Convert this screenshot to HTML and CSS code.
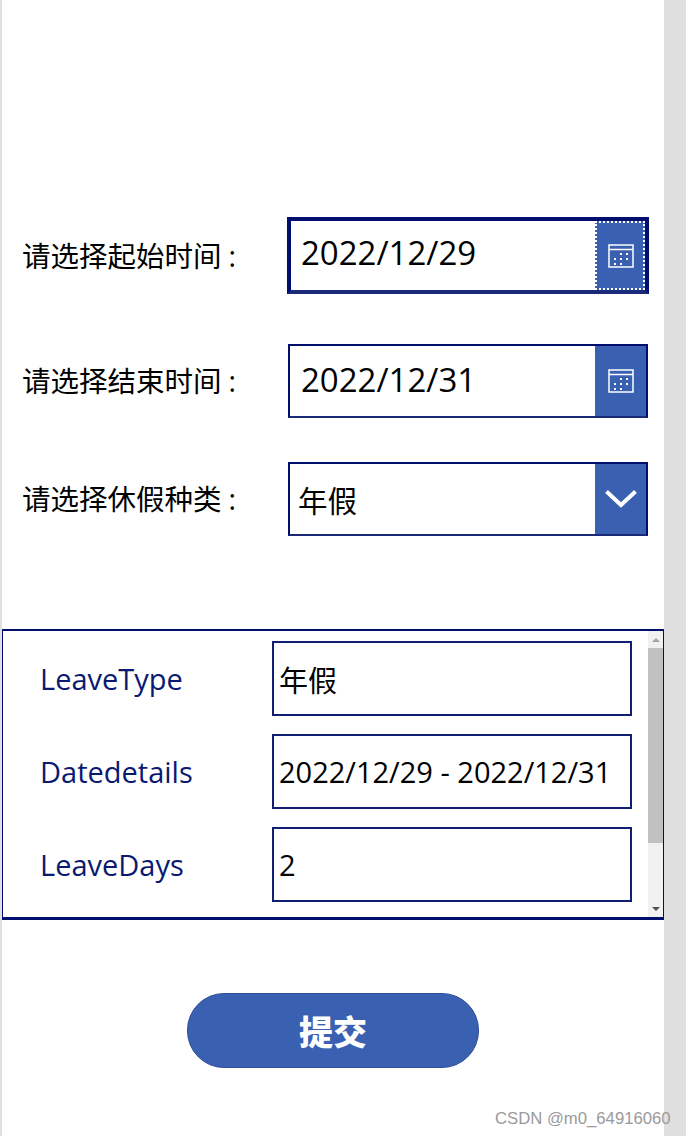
FILE: index.html
```html
<!DOCTYPE html>
<html lang="zh">
<head>
<meta charset="utf-8">
<title>请假申请</title>
<link rel="stylesheet" href="styles.css">
</head>
<body>
<div class="page">
  <main class="app">
    <section class="form">
      <div class="row row-first">
        <div class="label">请选择起始时间<span class="colon">:</span></div>
        <div class="field field-focus">
          <div class="value">2022/12/29</div>
          <div class="btn btn-focus">
            <svg class="cal" viewBox="0 0 26 24" width="26" height="24"><path d="M1 1h24v22H1zM1 5.500h24" fill="none" stroke="#fff" stroke-width="1.500"/><path d="M6 14h2v2H6zM6 19h2v2H6zM12 9h2v2h-2zM12 14h2v2h-2zM12 19h2v2h-2zM18 9h2v2h-2zM18 14h2v2h-2z" fill="#fff"/></svg>
          </div>
        </div>
      </div>
      <div class="row row-second">
        <div class="label">请选择结束时间<span class="colon">:</span></div>
        <div class="field">
          <div class="value">2022/12/31</div>
          <div class="btn">
            <svg class="cal" viewBox="0 0 26 24" width="26" height="24"><path d="M1 1h24v22H1zM1 5.500h24" fill="none" stroke="#fff" stroke-width="1.500"/><path d="M6 14h2v2H6zM6 19h2v2H6zM12 9h2v2h-2zM12 14h2v2h-2zM12 19h2v2h-2zM18 9h2v2h-2zM18 14h2v2h-2z" fill="#fff"/></svg>
          </div>
        </div>
      </div>
      <div class="row row-third">
        <div class="label">请选择休假种类<span class="colon">:</span></div>
        <div class="field">
          <div class="value value-select">年假</div>
          <div class="btn">
            <svg viewBox="0 0 32 20" width="32" height="20"><path d="M1.500 2.500l14.500 13.500L30.500 2.500" fill="none" stroke="#fff" stroke-width="4"/></svg>
          </div>
        </div>
      </div>
    </section>
    <section class="gallery">
      <div class="gallery-rows">
        <div class="item"><div class="item-name">LeaveType</div><div class="item-box">年假</div></div>
        <div class="item"><div class="item-name">Datedetails</div><div class="item-box">2022/12/29 - 2022/12/31</div></div>
        <div class="item"><div class="item-name">LeaveDays</div><div class="item-box">2</div></div>
      </div>
      <div class="scrollbar">
        <div class="arrow-box"><span class="arrow-up"></span></div>
        <div class="thumb"></div>
        <div class="track"></div>
        <div class="arrow-box"><span class="arrow-down"></span></div>
      </div>
    </section>
    <div class="submit-wrap"><button class="submit">提交</button></div>
    <div class="watermark">CSDN @m0_64916060</div>
  </main>
</div>
</body>
</html>
```
FILE: styles.css
```css
* { box-sizing: border-box; }
html, body { margin: 0; padding: 0; background: #dfdfdf; }
body { width: 686px; height: 1136px; overflow: hidden; font-family: "Open Sans", "Noto Sans CJK SC", sans-serif; color: #000; }
.page { height: 1136px; padding: 0 22px 0 2px; }
.app { position: relative; width: 662px; height: 1136px; background: #fff; }
.form { height: 629px; padding-top: 217px; padding-right: 15px; }
.row { display: flex; align-items: center; justify-content: space-between; }
.row-first { height: 77px; }
.row-second { height: 74px; margin-top: 50px; padding-right: 1px; }
.row-third { height: 74px; margin-top: 44px; padding-right: 1px; }
.label { padding-left: 20px; font-size: 28.500px; line-height: 40px; white-space: nowrap; }
.colon { margin-left: 7px; }
.field { display: flex; width: 360px; height: 100%; border: 2px solid #000f6e; border-bottom-color: #1a2a78; }
.field-focus { width: 362px; border-width: 4px; }
.value { flex: 1; padding-left: 11px; font-size: 33px; line-height: 68px; }
.field-focus .value { padding-left: 10px; line-height: 63px; }
.value.value-select { padding-left: 8px; font-size: 29.500px; line-height: 73px; }
.btn { display: flex; align-items: center; justify-content: center; width: 51px; background: #3a60b1; }
.btn-focus { width: 50px; outline: 2px dotted #fff; outline-offset: -2px; }
.cal { margin-left: 1px; }
.gallery { display: flex; height: 291px; border: 2px solid #000f6e; border-bottom-width: 3px; border-left-width: 1px; }
.gallery-rows { flex: 1; padding: 10px 16px 0 37px; display: flex; flex-direction: column; gap: 18px; }
.item { display: flex; align-items: center; justify-content: space-between; height: 75px; }
.item-name { font-size: 29px; color: #0a1a72; }
.item-box { display: flex; align-items: center; width: 360px; height: 75px; padding-left: 5px; border: 2px solid #101f72; font-size: 29px; white-space: nowrap; }
.scrollbar { display: flex; flex-direction: column; width: 15px; margin-right: -1px; background: #f1f1f1; }
.arrow-box { display: flex; align-items: center; justify-content: center; height: 17px; }
.arrow-up { width: 0; height: 0; border: 4px solid transparent; border-top: 0; border-bottom: 4px solid #a3a3a3; }
.arrow-down { width: 0; height: 0; border: 4px solid transparent; border-bottom: 0; border-top: 4px solid #505050; }
.thumb { height: 195px; background: #c1c1c1; }
.track { flex: 1; }
.submit-wrap { padding: 73px 0 0 185px; }
.submit { display: block; width: 292px; height: 75px; border: 1px solid #2f4f96; border-radius: 37px; background: #3a60b1; color: #fff; font-family: "Noto Sans CJK SC", sans-serif; font-size: 34px; font-weight: 900; line-height: 1; }
.watermark { position: absolute; left: 493px; top: 1109px; font-family: "Liberation Sans", sans-serif; font-size: 16.700px; line-height: 19px; color: #9a9a9a; white-space: nowrap; }
```
